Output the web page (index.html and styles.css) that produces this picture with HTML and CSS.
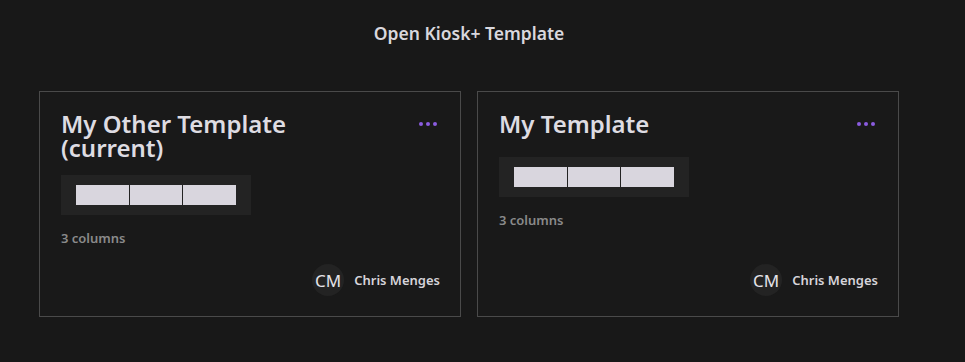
FILE: index.html
```html
<!DOCTYPE html>
<html>
<head>
<meta charset="utf-8">
<link rel="stylesheet" href="styles.css">
</head>
<body>
<div class="page">
  <h1 class="page-title">Open Kiosk+ Template</h1>
  <div class="grid">
    <div class="card">
      <div class="card-head">
        <h2 class="card-title">My Other Template (current)</h2>
        <button class="menu" aria-label="More"><span></span><span></span><span></span></button>
      </div>
      <div class="preview">
        <div class="cols"><div class="col"></div><div class="col"></div><div class="col"></div></div>
      </div>
      <div class="meta">3 columns</div>
      <div class="footer">
        <div class="avatar">CM</div>
        <div class="name">Chris Menges</div>
      </div>
    </div>
    <div class="card">
      <div class="card-head">
        <h2 class="card-title">My Template</h2>
        <button class="menu" aria-label="More"><span></span><span></span><span></span></button>
      </div>
      <div class="preview">
        <div class="cols"><div class="col"></div><div class="col"></div><div class="col"></div></div>
      </div>
      <div class="meta">3 columns</div>
      <div class="footer">
        <div class="avatar">CM</div>
        <div class="name">Chris Menges</div>
      </div>
    </div>
  </div>
</div>
</body>
</html>
```
FILE: styles.css
```css
html, body {
  margin: 0;
  padding: 0;
  background: #181818;
  height: 100%;
}
body {
  font-family: "Noto Sans", "Open Sans", sans-serif;
  color: #dedce2;
}
.page {
  width: 938px;
  box-sizing: border-box;
  padding: 20px 39px 0 39px;
}
.page-title {
  margin: 0;
  text-align: center;
  font-size: 17.5px;
  line-height: 26px;
  font-weight: 600;
  color: #d9d7dd;
}
.grid {
  margin-top: 45px;
  display: grid;
  grid-template-columns: 1fr 1fr;
  gap: 16px;
}
.card {
  height: 226px;
  box-sizing: border-box;
  border: 1px solid #4a4a4a;
  background: #191919;
  padding: 20px 20px 20px 21px;
  display: flex;
  flex-direction: column;
  align-items: flex-start;
}
.card-head {
  align-self: stretch;
  display: flex;
  justify-content: space-between;
  align-items: flex-start;
}
.card-title {
  margin: 0;
  font-size: 24px;
  line-height: 24px;
  font-weight: 600;
  color: #dedce2;
  max-width: 260px;
}
.menu {
  background: none;
  border: 0;
  height: 30px;
  box-sizing: border-box;
  padding: 10px 3px 0 0;
  display: flex;
  align-items: flex-start;
  gap: 3px;
  cursor: pointer;
}
.menu span {
  width: 4px;
  height: 4px;
  border-radius: 50%;
  background: #8b5ce0;
}
.preview {
  margin-top: 15px;
  width: 190px;
  height: 40px;
  box-sizing: border-box;
  background: #232323;
  padding: 10px 15px;
}
.cols {
  display: flex;
  gap: 1px;
  height: 20px;
}
.col {
  flex: 1;
  background: #d9d6de;
}
.meta {
  margin-top: 14px;
  font-size: 13px;
  line-height: 18px;
  font-weight: 600;
  color: #8a8a8a;
}
.footer {
  margin-top: auto;
  align-self: flex-end;
  display: flex;
  align-items: center;
  gap: 10px;
}
.avatar {
  width: 32px;
  height: 32px;
  border-radius: 50%;
  background: #232323;
  display: flex;
  align-items: center;
  justify-content: center;
  font-size: 17px;
  color: #e4e2e8;
}
.name {
  font-size: 13px;
  font-weight: 600;
  color: #d6d4da;
}
```
